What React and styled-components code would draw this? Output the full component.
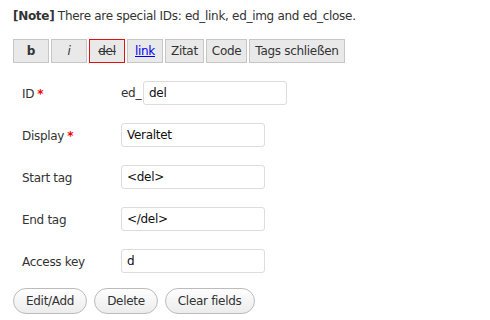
import React from "react";
import styled, { createGlobalStyle } from "styled-components";

const GlobalStyle = createGlobalStyle`
  body {
    margin: 0;
    background: #fff;
    font-family: "DejaVu Sans", Verdana, sans-serif;
    font-size: 12px;
    letter-spacing: -0.3px;
    color: #333;
  }
`;

const Page = styled.div`
  width: 490px;
  height: 320px;
  padding: 8px 13px 0;
  box-sizing: border-box;
`;

const Note = styled.p`
  margin: 0;
  line-height: 16px;
  b {
    font-weight: 700;
  }
`;

const Quickbar = styled.div`
  display: flex;
  gap: 2px;
  margin-top: 15px;
`;

const QuickButton = styled.button`
  height: 24px;
  min-width: 36px;
  padding: 0 5px;
  box-sizing: border-box;
  background: #e9e9e9;
  border: 1px solid ${(p) => (p.$active ? "#e01010" : "#c6c6c6")};
  font-family: inherit;
  font-size: 12px;
  letter-spacing: -0.3px;
  color: #333;
  font-weight: ${(p) => (p.$bold ? 700 : 400)};
  font-style: ${(p) => (p.$italic ? "italic" : "normal")};
  text-decoration: ${(p) => (p.$strike ? "line-through" : "none")};
  cursor: pointer;
`;

const LinkText = styled.span`
  color: #0000ee;
  text-decoration: underline;
`;

const Form = styled.div`
  display: grid;
  grid-template-columns: 99px auto;
  grid-auto-rows: 24px;
  row-gap: 18px;
  margin: 18px 0 0 9px;
  align-items: center;
`;

const Label = styled.label`
  color: #333;
  padding-top: 1px;
`;

const Required = styled.span`
  color: #e00;
  font-weight: 700;
  margin-left: 3px;
`;

const Field = styled.div`
  display: flex;
  align-items: center;
`;

const Prefix = styled.span`
  width: 22px;
`;

const Input = styled.input`
  width: 144px;
  height: 24px;
  box-sizing: border-box;
  border: 1px solid #dcdcdc;
  border-radius: 3px;
  padding: 0 5px;
  font-family: inherit;
  font-size: 12px;
  letter-spacing: -0.3px;
  color: #111;
  outline: none;
`;

const Actions = styled.div`
  display: flex;
  gap: 7px;
  margin-top: 15px;
`;

const RoundButton = styled.button`
  height: 26px;
  padding: 0 12px;
  box-sizing: border-box;
  border: 1px solid #bbb;
  border-radius: 13px;
  background: linear-gradient(#fefefe, #ececec);
  font-family: inherit;
  font-size: 12px;
  letter-spacing: -0.3px;
  color: #333;
`;

const fields = [
  { label: "Display", value: "Veraltet", required: true },
  { label: "Start tag", value: "<del>" },
  { label: "End tag", value: "</del>" },
  { label: "Access key", value: "d" },
];

export default function App() {
  return (
    <Page>
      <GlobalStyle />
      <Note>
        <b>[Note]</b> There are special IDs: ed_link, ed_img and ed_close.
      </Note>
      <Quickbar>
        <QuickButton $bold>b</QuickButton>
        <QuickButton $italic>i</QuickButton>
        <QuickButton $active $strike>del</QuickButton>
        <QuickButton>
          <LinkText>link</LinkText>
        </QuickButton>
        <QuickButton>Zitat</QuickButton>
        <QuickButton>Code</QuickButton>
        <QuickButton>Tags schließen</QuickButton>
      </Quickbar>
      <Form>
        <Label>
          ID<Required>*</Required>
        </Label>
        <Field>
          <Prefix>ed_</Prefix>
          <Input defaultValue="del" />
        </Field>
        {fields.map((f) => (
          <React.Fragment key={f.label}>
            <Label>
              {f.label}
              {f.required && <Required>*</Required>}
            </Label>
            <Field>
              <Input defaultValue={f.value} />
            </Field>
          </React.Fragment>
        ))}
      </Form>
      <Actions>
        <RoundButton>Edit/Add</RoundButton>
        <RoundButton>Delete</RoundButton>
        <RoundButton>Clear fields</RoundButton>
      </Actions>
    </Page>
  );
}
